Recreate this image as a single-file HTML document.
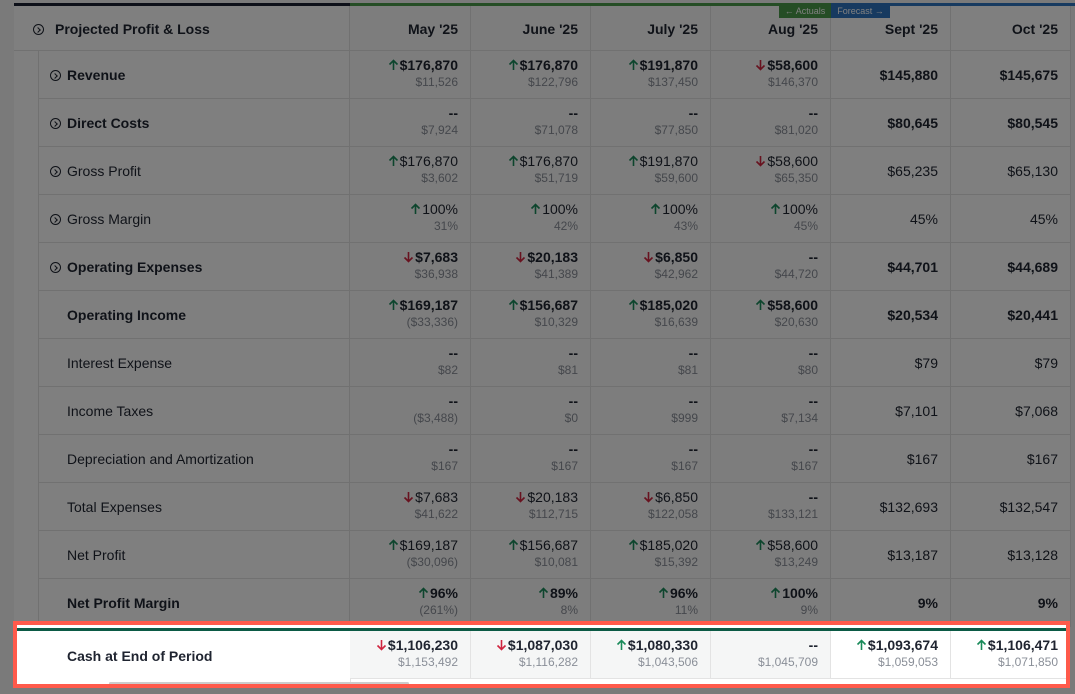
<!DOCTYPE html><html><head><style>
body{margin:0;width:1075px;height:694px;overflow:hidden;background:#f4f4f4;font-family:"Liberation Sans",sans-serif;position:relative}
.a{position:absolute}
.cell{position:absolute;box-sizing:border-box;border-right:1px solid #e3e3e3;border-bottom:1px solid #e3e3e3;background:#fff}
.act{background:#fafafa}
.m{position:absolute;right:12px;font-size:14px;font-weight:bold;color:#1f2430;white-space:nowrap}
.s{position:absolute;right:12px;font-size:12px;color:#8a8f98;white-space:nowrap}
.m svg{vertical-align:-1px;margin-right:1px}
.lab{position:absolute;left:52px;font-size:14px;color:#1f2430;white-space:nowrap}
.ic{display:inline-block;box-sizing:border-box;width:11px;height:11px;border:1px solid #1f2430;border-radius:50%;margin-right:6px;vertical-align:-1px;position:relative}
.ic:after{content:"";position:absolute;left:2px;top:2.5px;width:3px;height:3px;border-right:1px solid #1f2430;border-top:1px solid #1f2430;transform:rotate(45deg)}
#ov{position:absolute;left:0;top:0;width:1075px;height:694px;background:rgba(0,0,0,0.5);z-index:5}
#hl{position:absolute;left:13px;top:621px;width:1057px;height:67px;box-sizing:border-box;border:4px solid #ff5a4b;z-index:6;background:#fff;overflow:hidden}
</style></head><body>
<div class="a" style="left:14px;top:3px;width:336px;height:3px;background:#1a2033"></div>
<div class="a" style="left:350px;top:3px;width:481px;height:3px;background:#4a9a4a"></div>
<div class="a" style="left:831px;top:3px;width:244px;height:3px;background:#2f74c0"></div>
<div class="a" style="left:779px;top:4px;width:52px;height:14px;background:#4a9a4a;color:#fff;font-size:9px;line-height:14px;text-align:center;z-index:2">← Actuals</div>
<div class="a" style="left:831px;top:4px;width:59px;height:14px;background:#2f74c0;color:#fff;font-size:9px;line-height:14px;text-align:center;z-index:2">Forecast →</div>
<div id="t"></div>
<div id="ov"></div>
<div id="hl">
 <div class="a" style="left:0;top:3px;width:1060px;height:3px;background:#0b5a45"></div>
 <div class="a" style="left:50px;top:23px;font-size:14px;font-weight:bold;color:#1f2430">Cash at End of Period</div>
 <div class="a" style="left:333px;top:6px;width:1px;height:52px;background:#e3e3e3"></div>
 <div id="hc"></div>
 <div class="a" style="left:92px;top:57px;width:300px;height:3px;background:#ccc;border-radius:2px"></div>
</div>
<script>
const cols=[350,471,591,711,831,951,1071];
const rows=[
["Revenue",1,1,[["u","$176,870","$11,526"],["u","$176,870","$122,796"],["u","$191,870","$137,450"],["d","$58,600","$146,370"],"$145,880","$145,675"]],
["Direct Costs",1,1,[["","--","$7,924"],["","--","$71,078"],["","--","$77,850"],["","--","$81,020"],"$80,645","$80,545"]],
["Gross Profit",0,1,[["u","$176,870","$3,602"],["u","$176,870","$51,719"],["u","$191,870","$59,600"],["d","$58,600","$65,350"],"$65,235","$65,130"]],
["Gross Margin",0,1,[["u","100%","31%"],["u","100%","42%"],["u","100%","43%"],["u","100%","45%"],"45%","45%"]],
["Operating Expenses",1,1,[["d","$7,683","$36,938"],["d","$20,183","$41,389"],["d","$6,850","$42,962"],["","--","$44,720"],"$44,701","$44,689"]],
["Operating Income",1,0,[["u","$169,187","($33,336)"],["u","$156,687","$10,329"],["u","$185,020","$16,639"],["u","$58,600","$20,630"],"$20,534","$20,441"]],
["Interest Expense",0,0,[["","--","$82"],["","--","$81"],["","--","$81"],["","--","$80"],"$79","$79"]],
["Income Taxes",0,0,[["","--","($3,488)"],["","--","$0"],["","--","$999"],["","--","$7,134"],"$7,101","$7,068"]],
["Depreciation and Amortization",0,0,[["","--","$167"],["","--","$167"],["","--","$167"],["","--","$167"],"$167","$167"]],
["Total Expenses",0,0,[["d","$7,683","$41,622"],["d","$20,183","$112,715"],["d","$6,850","$122,058"],["","--","$133,121"],"$132,693","$132,547"]],
["Net Profit",0,0,[["u","$169,187","($30,096)"],["u","$156,687","$10,081"],["u","$185,020","$15,392"],["u","$58,600","$13,249"],"$13,187","$13,128"]],
["Net Profit Margin",1,0,[["u","96%","(261%)"],["u","89%","8%"],["u","96%","11%"],["u","100%","9%"],"9%","9%"]]];
function ar(k){if(k=="u")return '<svg width="11" height="12" viewBox="0 0 11 12"><path d="M5.5 11V1.5M1.5 5.5L5.5 1.5L9.5 5.5" fill="none" stroke="#1a8a5a" stroke-width="1.6"/></svg>';
if(k=="d")return '<svg width="11" height="12" viewBox="0 0 11 12"><path d="M5.5 1V10.5M1.5 6.5L5.5 10.5L9.5 6.5" fill="none" stroke="#d0243f" stroke-width="1.6"/></svg>';return ''}
let h='';
h+=`<div class="cell" style="left:14px;top:6px;width:336px;height:45px"><div class="a" style="left:19px;top:15px;font-size:14px;font-weight:bold;color:#1f2430"><span class="ic" style="margin-right:11px"></span>Projected Profit &amp; Loss</div></div>`;
const hd=["May '25","June '25","July '25","Aug '25","Sept '25","Oct '25"];
for(let c=0;c<6;c++)h+=`<div class="cell ${c<4?'act':''}" style="left:${cols[c]}px;top:6px;width:${cols[c+1]-cols[c]}px;height:45px"><div class="m" style="top:15px">${hd[c]}</div></div>`;
rows.forEach((r,i)=>{const t=51+48*i;
h+=`<div class="cell" style="left:14px;top:${t}px;width:336px;height:48px;border-bottom:none"><div class="a" style="left:24px;top:0;width:1px;height:48px;background:#e3e3e3"></div><div class="a" style="left:25px;top:47px;width:311px;height:1px;background:#e3e3e3"></div><div class="lab" style="${r[2]?'left:36px;':'left:53px;'}top:16px;${r[1]?'font-weight:bold':''}">${r[2]?'<span class="ic"></span>':''}${r[0]}</div></div>`;
r[3].forEach((v,c)=>{h+=`<div class="cell ${c<4?'act':''}" style="left:${cols[c]}px;top:${t}px;width:${cols[c+1]-cols[c]}px;height:48px">`;
if(typeof v=="string")h+=`<div class="m" style="top:16px;${r[1]?'':'font-weight:normal'}">${v}</div>`;
else h+=`<div class="m" style="top:6px;${r[1]||v[1]=='--'?'':'font-weight:normal'}">${ar(v[0])}${v[1]}</div><div class="s" style="top:24px">${v[2]}</div>`;
h+='</div>'});});
document.getElementById('t').innerHTML=h;
const hc=[["d","$1,106,230","$1,153,492"],["d","$1,087,030","$1,116,282"],["u","$1,080,330","$1,043,506"],["","--","$1,045,709"],["u","$1,093,674","$1,059,053"],["u","$1,106,471","$1,071,850"]];
let g='';hc.forEach((v,c)=>{g+=`<div class="a" style="left:${cols[c]-17}px;top:6px;width:${cols[c+1]-cols[c]}px;height:48px;box-sizing:border-box;border-right:1px solid #e3e3e3;border-bottom:1px solid #e3e3e3;background:${c<4?'#f5f6f6':'#fff'}"><div class="m" style="top:6px">${ar(v[0])}${v[1]}</div><div class="s" style="top:24px">${v[2]}</div></div>`});
document.getElementById('hc').innerHTML=g;
</script></body></html>
